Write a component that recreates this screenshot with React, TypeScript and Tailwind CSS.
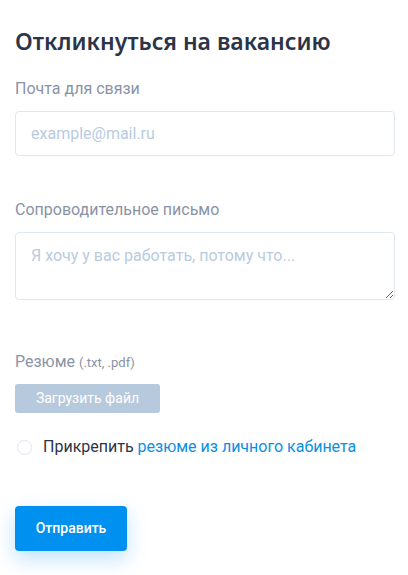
import React from "react";

export default function App() {
  return (
    <div className="min-h-screen bg-white pl-[15px] pr-[13px] pt-[27px]" style={{ fontFamily: "Roboto, 'Liberation Sans', sans-serif" }}>
      <h1 className="text-[23px] leading-[28px] font-semibold text-[#2c3447]" style={{ fontFamily: "'Noto Sans', 'Open Sans', sans-serif" }}>
        Откликнуться на вакансию
      </h1>
      <div className="mt-[24px] text-[16px] leading-[20px] text-[#8a93a5]">Почта для связи</div>
      <input
        type="text"
        placeholder="example@mail.ru"
        className="mt-[12px] block w-full h-[45px] rounded-[4px] border border-[#e1e7f0] px-[15px] text-[16px] outline-none placeholder:text-[#b9cbe0]"
      />
      <div className="mt-[44px] text-[16px] leading-[20px] text-[#8a93a5]">Сопроводительное письмо</div>
      <textarea
        placeholder="Я хочу у вас работать, потому что..."
        className="mt-[12px] block w-full h-[68px] rounded-[4px] border border-[#e1e7f0] px-[15px] py-[12px] text-[16px] leading-[22px] outline-none placeholder:text-[#b9cbe0]"
      />
      <div className="mt-[52px] text-[16px] leading-[20px] text-[#8a93a5]">
        Резюме <span className="text-[13px]">(.txt, .pdf)</span>
      </div>
      <button className="mt-[11px] block w-[145px] h-[29px] rounded-[3px] bg-[#b7c9dd] text-white text-[14px]">
        Загрузить файл
      </button>
      <div className="mt-[23px] flex items-center">
        <span className="ml-[2px] w-[15px] h-[15px] rounded-full border border-[#e1e7f0] bg-white"></span>
        <span className="ml-[11px] text-[16px] leading-[22px] text-[#2c3447]">
          Прикрепить <span className="text-[#0a8fe3]">резюме из личного кабинета</span>
        </span>
      </div>
      <button className="mt-[48px] block w-[112px] h-[45px] rounded-[4px] bg-[#0090ef] text-white text-[14px] font-medium shadow-[0_8px_20px_rgba(0,144,239,0.25)]">
        Отправить
      </button>
    </div>
  );
}
